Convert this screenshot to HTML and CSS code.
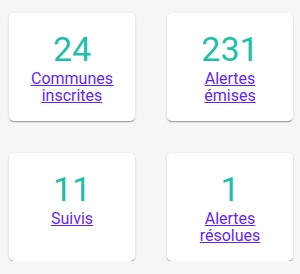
FILE: index.html
```html
<!DOCTYPE html>
<html lang="fr">
<head>
<meta charset="utf-8">
<link rel="stylesheet" href="styles.css">
</head>
<body>
<div class="stats">
  <div class="card">
    <div class="value">24</div>
    <a class="label" href="#">Communes<br>inscrites</a>
  </div>
  <div class="card">
    <div class="value">231</div>
    <a class="label" href="#">Alertes<br>émises</a>
  </div>
  <div class="card">
    <div class="value">11</div>
    <a class="label" href="#">Suivis</a>
  </div>
  <div class="card">
    <div class="value">1</div>
    <a class="label" href="#">Alertes<br>résolues</a>
  </div>
</div>
</body>
</html>
```
FILE: styles.css
```css
html, body {
  margin: 0;
  padding: 0;
  background: #f6f6f6;
  font-family: Roboto, "Liberation Sans", sans-serif;
}
.stats {
  display: grid;
  grid-template-columns: 126px 126px;
  column-gap: 32px;
  row-gap: 32px;
  padding: 13px 0 0 9px;
}
.card {
  background: #fff;
  border-radius: 5px;
  height: 108px;
  box-sizing: border-box;
  padding-top: 16px;
  display: flex;
  flex-direction: column;
  align-items: center;
  text-align: center;
  box-shadow: 0 2px 1px -1px rgba(0,0,0,0.2), 0 1px 1px 0 rgba(0,0,0,0.14), 0 1px 3px 0 rgba(0,0,0,0.12);
}
.value {
  font-size: 34px;
  line-height: 41px;
  color: #1cbfa8;
  font-weight: 400;
}
.label {
  font-size: 16px;
  line-height: 17px;
  color: #651fff;
  text-decoration: underline;
}
```
